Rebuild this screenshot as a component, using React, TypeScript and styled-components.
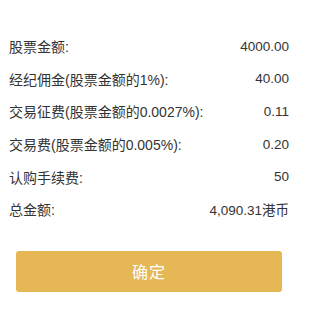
import React from "react";
import styled, { createGlobalStyle } from "styled-components";

const GlobalStyle = createGlobalStyle`
  html, body {
    margin: 0;
    padding: 0;
    background: #ffffff;
  }
  body {
    font-family: "Liberation Sans", "Noto Sans CJK SC", sans-serif;
    -webkit-font-smoothing: antialiased;
  }
`;

const Panel = styled.div`
  width: 300px;
  height: 310px;
  box-sizing: border-box;
  padding: 30px 11px 0 9px;
  display: flex;
  flex-direction: column;
  background: #ffffff;
`;

const List = styled.div`
  display: flex;
  flex-direction: column;
`;

const Row = styled.div`
  height: 32.6px;
  display: flex;
  align-items: center;
  justify-content: space-between;
  color: #333333;
`;

const Label = styled.span`
  font-size: 14px;
  white-space: nowrap;
`;

const Value = styled.span`
  font-size: 13.5px;
  white-space: nowrap;
`;

const Footer = styled.div`
  display: flex;
  justify-content: center;
  padding-top: 25px;
`;

const ConfirmButton = styled.button`
  width: 266px;
  height: 41px;
  border: none;
  border-radius: 3px;
  background: #e6b755;
  color: #ffffff;
  font-family: "Noto Sans CJK SC", sans-serif;
  font-size: 16px;
  letter-spacing: 1px;
  cursor: pointer;
`;

const rows = [
  { label: "股票金额:", value: "4000.00" },
  { label: "经纪佣金(股票金额的1%):", value: "40.00" },
  { label: "交易征费(股票金额的0.0027%):", value: "0.11" },
  { label: "交易费(股票金额的0.005%):", value: "0.20" },
  { label: "认购手续费:", value: "50" },
  { label: "总金额:", value: "4,090.31港币" },
];

export default function App() {
  return (
    <>
      <GlobalStyle />
      <Panel>
        <List>
          {rows.map((row) => (
            <Row key={row.label}>
              <Label>{row.label}</Label>
              <Value>{row.value}</Value>
            </Row>
          ))}
        </List>
        <Footer>
          <ConfirmButton>确定</ConfirmButton>
        </Footer>
      </Panel>
    </>
  );
}
